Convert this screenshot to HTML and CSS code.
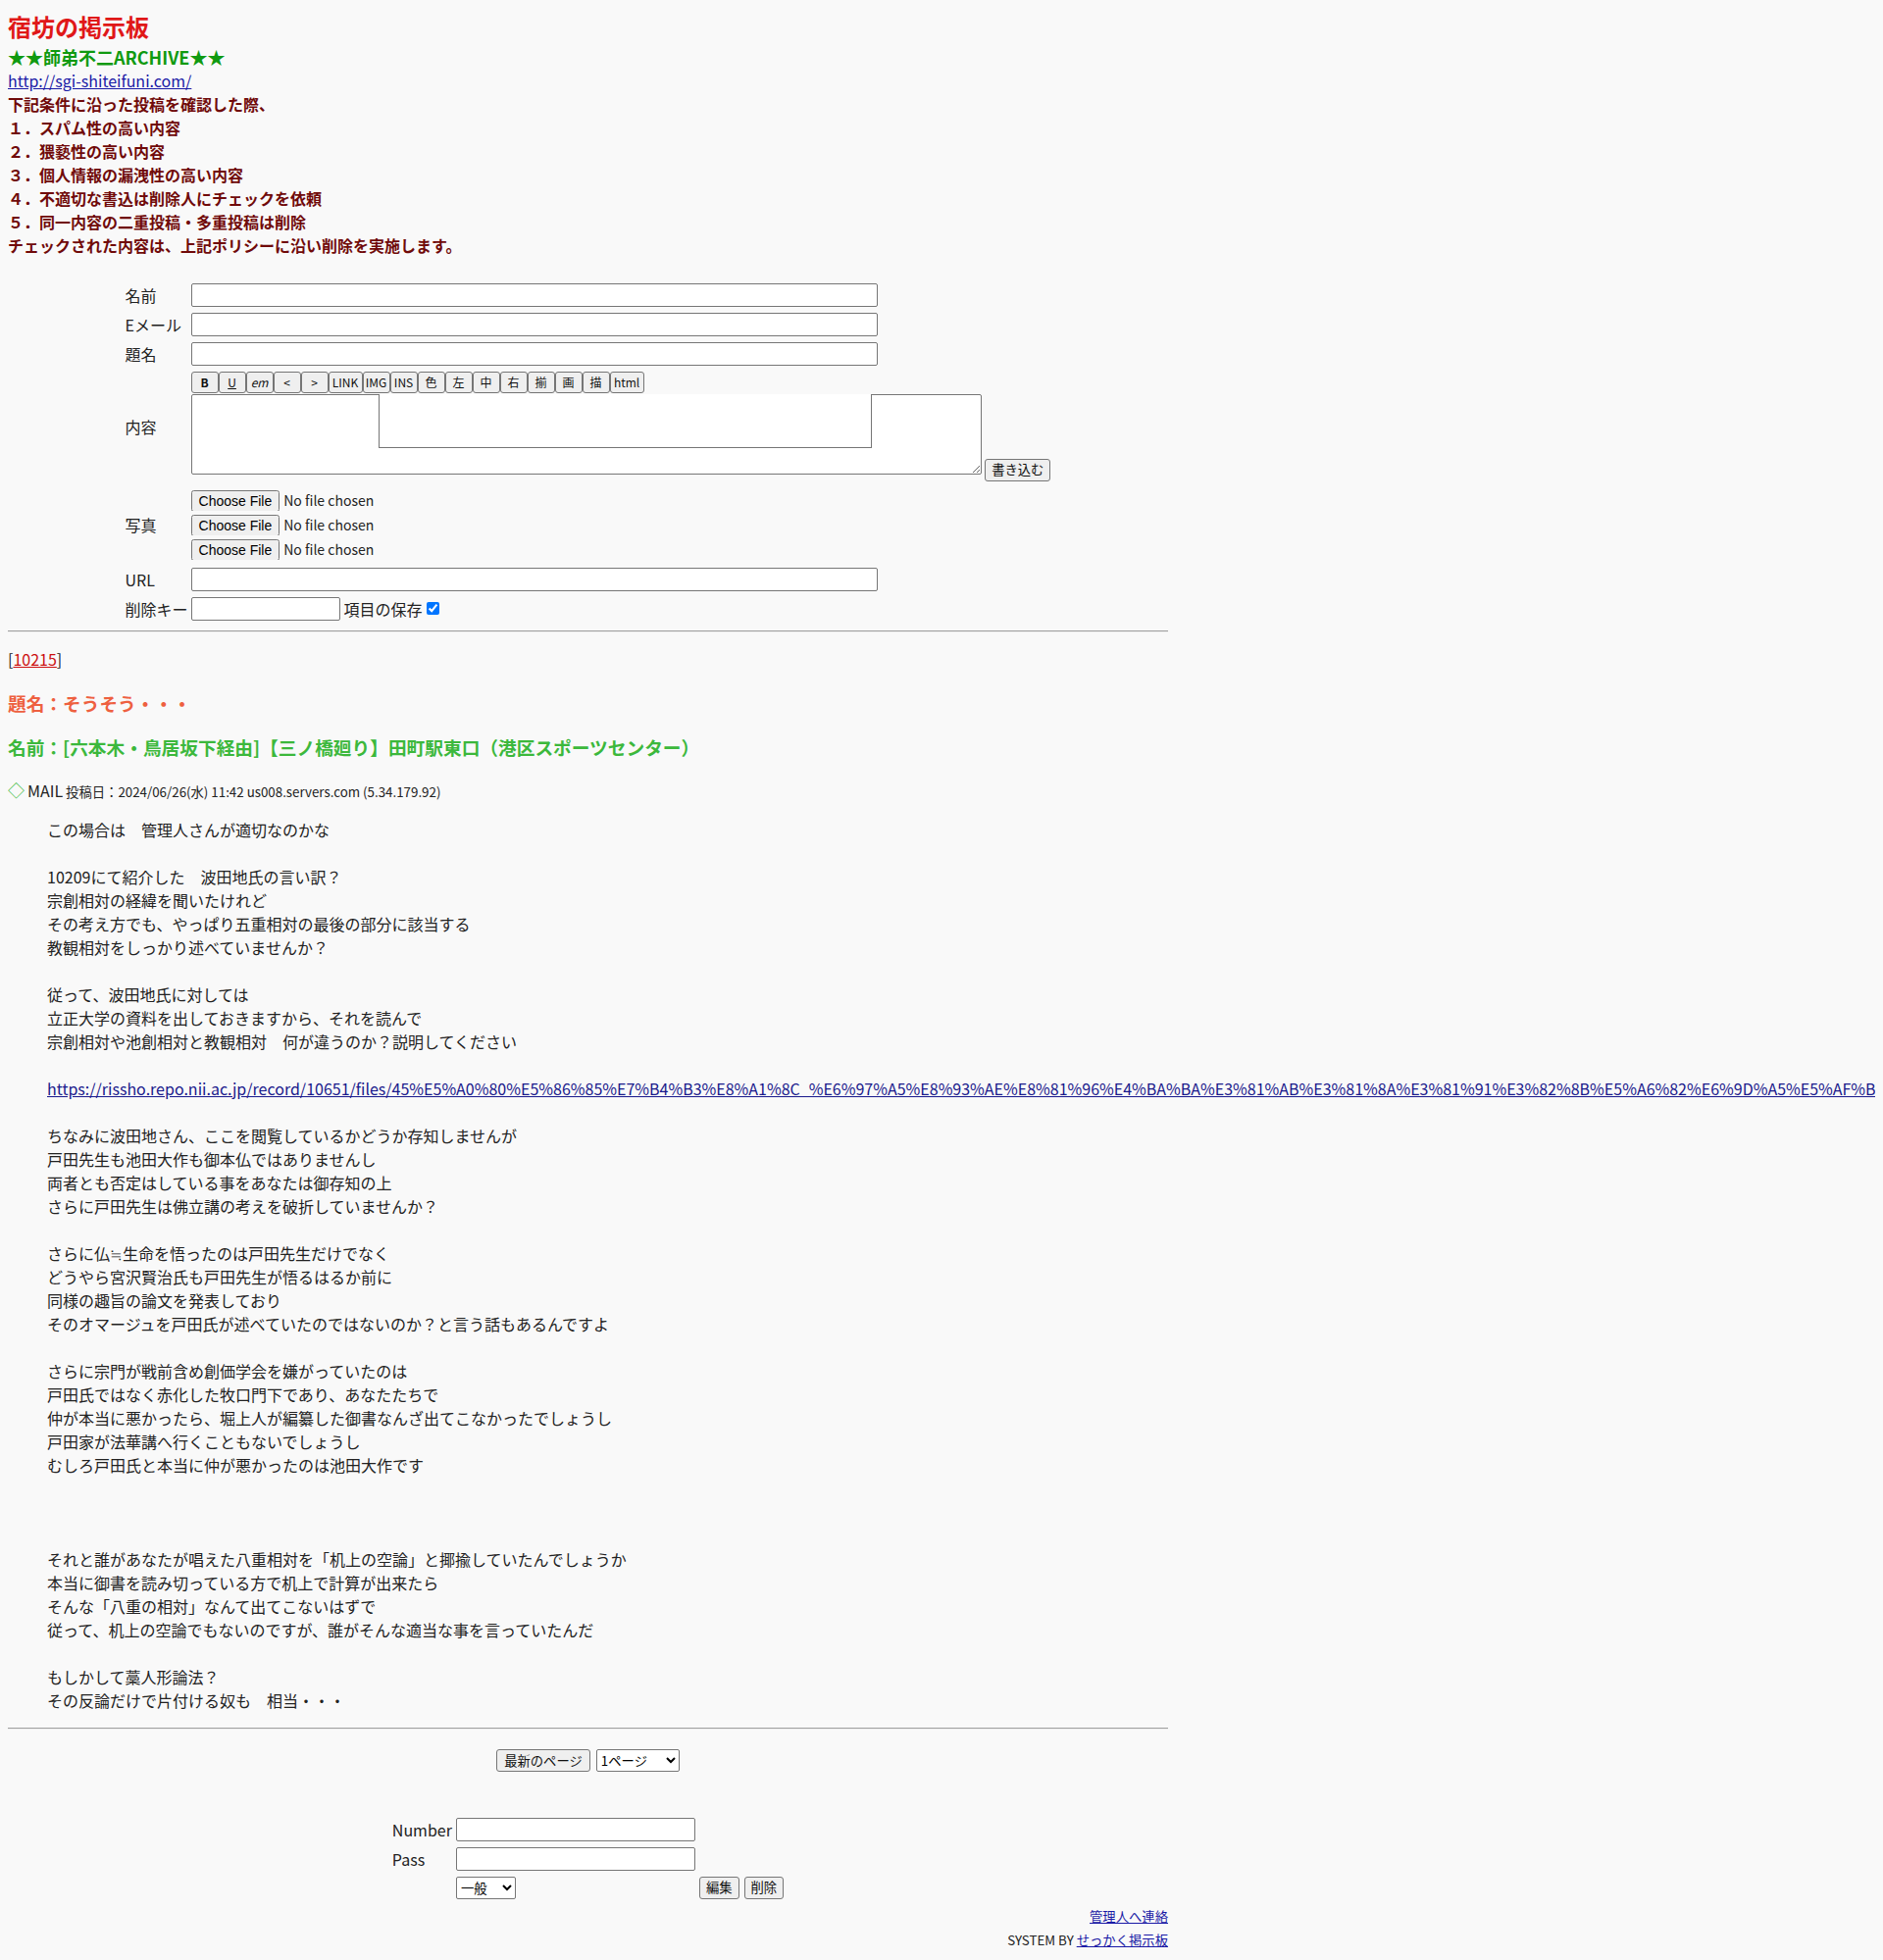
FILE: index.html
```html
<!DOCTYPE html>
<html lang="ja">

<head>
    <meta charset="UTF-8">
    <title>宿坊の掲示板</title>
    <link rel="stylesheet" href="styles.css">
</head>

<body>
    <div class="wrap">
        <div class="title">宿坊の掲示板</div>
        <div class="subtitle">★★師弟不二ARCHIVE★★</div>
        <div class="site-link"><a href="#">http://sgi-shiteifuni.com/</a></div>
        <div class="policy">
            下記条件に沿った投稿を確認した際、<br>
            １．スパム性の高い内容<br>
            ２．猥褻性の高い内容<br>
            ３．個人情報の漏洩性の高い内容<br>
            ４．不適切な書込は削除人にチェックを依頼<br>
            ５．同一内容の二重投稿・多重投稿は削除<br>
            チェックされた内容は、上記ポリシーに沿い削除を実施します。
        </div>

        <!-- post form -->
        <table class="post-form">
            <tr>
                <td class="label">名前</td>
                <td><input type="text" class="wide"></td>
            </tr>
            <tr>
                <td class="label">Eメール</td>
                <td><input type="text" class="wide"></td>
            </tr>
            <tr>
                <td class="label">題名</td>
                <td><input type="text" class="wide"></td>
            </tr>
            <tr>
                <td class="label">内容</td>
                <td>
                    <div class="toolbar">
                        <button type="button" class="tb"><b>B</b></button><button type="button" class="tb"><u>U</u></button><button type="button" class="tb"><i>em</i></button><button type="button" class="tb">&lt;</button><button type="button" class="tb">&gt;</button><button type="button" class="tb">LINK</button><button type="button" class="tb">IMG</button><button type="button" class="tb">INS</button><button type="button" class="tb">色</button><button type="button" class="tb">左</button><button type="button" class="tb">中</button><button type="button" class="tb">右</button><button type="button" class="tb">揃</button><button type="button" class="tb">画</button><button type="button" class="tb">描</button><button type="button" class="tb">html</button>
                    </div>
                    <span class="area-box">
                        <textarea class="content"></textarea>
                        <span class="preview"></span>
                    </span>
                    <button type="button" class="btn">書き込む</button>
                </td>
            </tr>
            <tr>
                <td class="label">写真</td>
                <td>
                    <div class="file-list">
                        <input type="file">
                        <input type="file">
                        <input type="file">
                    </div>
                </td>
            </tr>
            <tr>
                <td class="label">URL</td>
                <td><input type="text" class="wide"></td>
            </tr>
            <tr>
                <td class="label">削除キー</td>
                <td>
                    <div class="key-row"><input type="password" class="delkey"> 項目の保存 <input type="checkbox" class="keep" checked></div>
                </td>
            </tr>
        </table>

        <hr>

        <!-- article -->
        <div class="post-no">[<a href="#">10215</a>]</div>
        <div class="post-title">題名：そうそう・・・</div>
        <div class="post-name">名前：[六本木・鳥居坂下経由]【三ノ橋廻り】田町駅東口（港区スポーツセンター）</div>
        <div class="post-meta"><span class="mark">◇</span> <span class="mail">MAIL</span> 投稿日：2024/06/26(水) 11:42 us008.servers.com (5.34.179.92)</div>
        <div class="post-body">
            この場合は　管理人さんが適切なのかな<br>
            <br>
            10209にて紹介した　波田地氏の言い訳？<br>
            宗創相対の経緯を聞いたけれど<br>
            その考え方でも、やっぱり五重相対の最後の部分に該当する<br>
            教観相対をしっかり述べていませんか？<br>
            <br>
            従って、波田地氏に対しては<br>
            立正大学の資料を出しておきますから、それを読んで<br>
            宗創相対や池創相対と教観相対　何が違うのか？説明してください<br>
            <br>
            <a href="#" class="ext">https://rissho.repo.nii.ac.jp/record/10651/files/45%E5%A0%80%E5%86%85%E7%B4%B3%E8%A1%8C_%E6%97%A5%E8%93%AE%E8%81%96%E4%BA%BA%E3%81%AB%E3%81%8A%E3%81%91%E3%82%8B%E5%A6%82%E6%9D%A5%E5%AF%BF%E9%87%8F%E5%93%81.pdf</a><br>
            <br>
            ちなみに波田地さん、ここを閲覧しているかどうか存知しませんが<br>
            戸田先生も池田大作も御本仏ではありませんし<br>
            両者とも否定はしている事をあなたは御存知の上<br>
            さらに戸田先生は佛立講の考えを破折していませんか？<br>
            <br>
            さらに仏≒生命を悟ったのは戸田先生だけでなく<br>
            どうやら宮沢賢治氏も戸田先生が悟るはるか前に<br>
            同様の趣旨の論文を発表しており<br>
            そのオマージュを戸田氏が述べていたのではないのか？と言う話もあるんですよ<br>
            <br>
            さらに宗門が戦前含め創価学会を嫌がっていたのは<br>
            戸田氏ではなく赤化した牧口門下であり、あなたたちで<br>
            仲が本当に悪かったら、堀上人が編纂した御書なんざ出てこなかったでしょうし<br>
            戸田家が法華講へ行くこともないでしょうし<br>
            むしろ戸田氏と本当に仲が悪かったのは池田大作です<br>
            <br>
            <br>
            <br>
            それと誰があなたが唱えた八重相対を「机上の空論」と揶揄していたんでしょうか<br>
            本当に御書を読み切っている方で机上で計算が出来たら<br>
            そんな「八重の相対」なんて出てこないはずで<br>
            従って、机上の空論でもないのですが、誰がそんな適当な事を言っていたんだ<br>
            <br>
            もしかして藁人形論法？<br>
            その反論だけで片付ける奴も　相当・・・
        </div>

        <hr class="bottom-rule">

        <div class="pager">
            <button type="button" class="btn">最新のページ</button>
            <select class="page-select">
                <option>1ページ</option>
            </select>
        </div>

        <!-- edit / delete -->
        <table class="edit-form">
            <tr>
                <td>Number</td>
                <td><input type="text" class="small"></td>
                <td></td>
            </tr>
            <tr>
                <td>Pass</td>
                <td><input type="password" class="small"></td>
                <td></td>
            </tr>
            <tr>
                <td></td>
                <td><select class="mode-select"><option>一般</option></select></td>
                <td>
                    <div class="edit-buttons"><button type="button" class="btn">編集</button><button type="button" class="btn">削除</button></div>
                </td>
            </tr>
        </table>

        <div class="footer">
            <a href="#">管理人へ連絡</a><br>
            SYSTEM BY <a href="#">せっかく掲示板</a>
        </div>
    </div>
</body>

</html>
```

FILE: styles.css
```css
/* base */
body {
    margin: 8px;
    background-color: #f9f9f9;
    color: #222222;
    font-family: "Noto Sans CJK JP", sans-serif;
    font-size: 16px;
    line-height: 24px;
}

a {
    color: #1a1aa6;
}

input, button, select, textarea {
    font-family: "Noto Sans CJK JP", sans-serif;
}

.wrap {
    width: 1183px;
}

/* header */
.title {
    color: #e01818;
    font-size: 24px;
    font-weight: bold;
    line-height: 38px;
}

.subtitle {
    color: #109a10;
    font-size: 18px;
    font-weight: bold;
}

.policy {
    color: #700a0a;
    font-size: 16px;
    font-weight: bold;
}

/* post form */
.post-form {
    margin: 24px auto 0;
    border-collapse: collapse;
}

.post-form td {
    padding: 3px 2px;
    font-size: 16px;
}

.post-form .label {
    white-space: nowrap;
    vertical-align: middle;
    padding-right: 1px;
}

input[type="text"], input[type="password"] {
    box-sizing: border-box;
    height: 24px;
    margin: 0;
    padding: 1px 3px;
    border: 1px solid #767676;
    border-radius: 2px;
    background: #ffffff;
    font-size: 13px;
}

.wide {
    display: block;
    width: 700px;
}

.key-row {
    display: flex;
    align-items: center;
    gap: 4px;
    height: 24px;
}

.delkey {
    width: 152px;
}

.toolbar {
    display: flex;
    height: 23px;
}

.tb {
    box-sizing: border-box;
    min-width: 28px;
    height: 22px;
    padding: 0 2px;
    margin: 0;
    border: 1px solid #767676;
    border-radius: 3px;
    background-color: #efefef;
    color: #111111;
    font-size: 12px;
    line-height: 18px;
}

.tb:nth-child(6), .tb:nth-child(16) {
    min-width: 35px;
}

.area-box {
    position: relative;
    display: inline-block;
    vertical-align: baseline;
}

.content {
    box-sizing: border-box;
    display: block;
    width: 806px;
    height: 82px;
    margin: 0;
    border: 1px solid #767676;
    border-radius: 2px;
    background: #ffffff;
}

.preview {
    position: absolute;
    left: 191px;
    top: 0;
    width: 503px;
    height: 55px;
    box-sizing: border-box;
    border: 1px solid #767676;
    border-top: none;
    background: #ffffff;
}

.btn {
    box-sizing: border-box;
    height: 23px;
    margin: 0;
    padding: 0 6px;
    border: 1px solid #767676;
    border-radius: 3px;
    background-color: #efefef;
    color: #111111;
    font-size: 13.33px;
    line-height: 20px;
}

.file-list {
    display: flex;
    flex-direction: column;
    align-items: flex-start;
    gap: 4px;
    padding: 3px 0 2px;
}

.file-list input[type="file"] {
    height: 21px;
    margin: 0;
    font-size: 14px;
}

.keep {
    margin: 0;
}

hr {
    margin: 7px 0 0;
    border: 0;
    border-top: 1px solid #a0a0a0;
    border-bottom: 1px solid #eeeeee;
}

/* article */
.post-no {
    margin-top: 15px;
}

.post-no a {
    color: #cc1111;
}

.post-title {
    margin-top: 19px;
    color: #ee6040;
    font-size: 18.7px;
    font-weight: bold;
    line-height: 28px;
}

.post-name {
    margin-top: 17px;
    color: #3cb83c;
    font-size: 18.7px;
    font-weight: bold;
    line-height: 28px;
}

.post-meta {
    margin-top: 18px;
    font-size: 13.33px;
}

.mark {
    color: #44bb44;
    font-size: 17px;
}

.mail {
    font-size: 16px;
}

.post-body {
    margin: 14px 0 16px 40px;
    white-space: nowrap;
}

.ext {
    color: #1a1a8c;
}

.bottom-rule {
    margin: 0;
}

.pager {
    display: flex;
    justify-content: center;
    align-items: center;
    gap: 6px;
    height: 24px;
    margin-top: 20px;
}

.pager .btn {
    padding: 0 7px;
}

.pager select, .edit-form select {
    box-sizing: border-box;
    height: 23px;
    margin: 0;
    border: 1px solid #767676;
    border-radius: 2px;
    background: #ffffff;
    font-size: 13.33px;
}

.page-select {
    width: 85px;
}

.mode-select {
    display: block;
    width: 61px;
}

/* edit form */
.edit-form {
    margin: 43px auto 0;
    border-collapse: collapse;
}

.edit-form td {
    padding: 3px 2px;
}

.small {
    display: block;
    width: 244px;
}

.edit-buttons {
    display: flex;
    gap: 5px;
}

.footer {
    margin-top: 3px;
    text-align: right;
    font-size: 13.33px;
}
```
